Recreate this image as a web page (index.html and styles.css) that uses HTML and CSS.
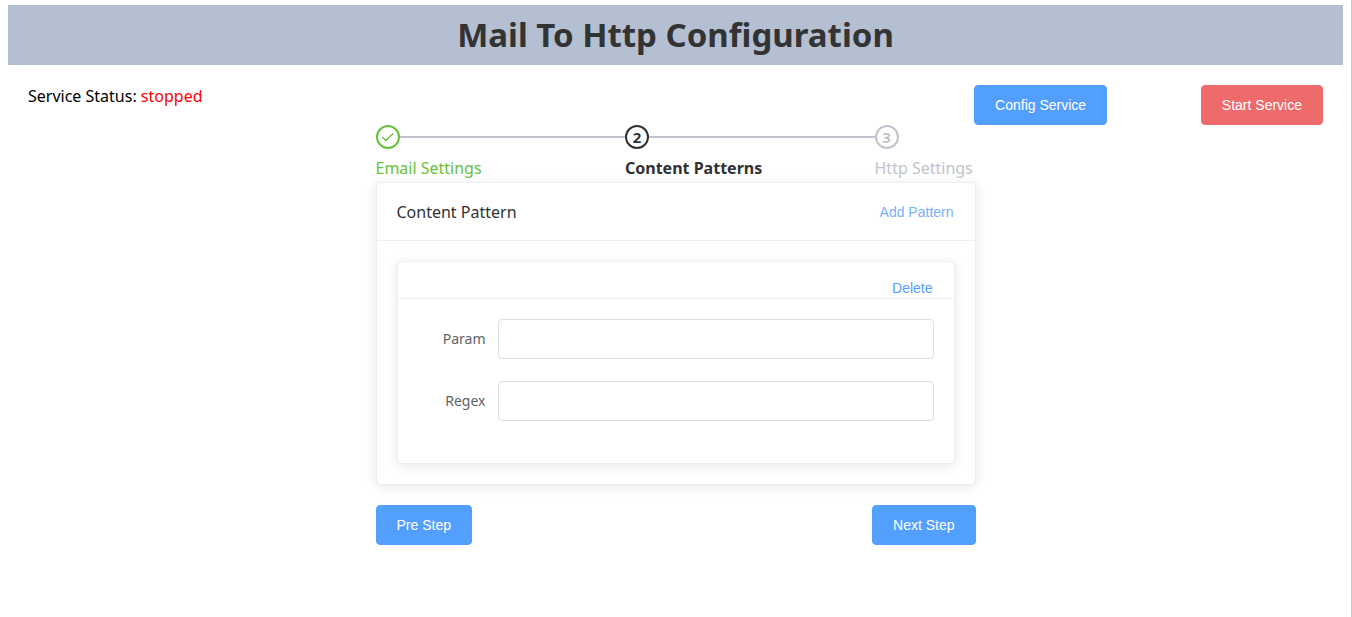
FILE: index.html
```html
<!DOCTYPE html>
<html lang="en">
<head>
<meta charset="utf-8">
<meta name="viewport" content="width=device-width, initial-scale=1">
<title>Mail To Http Configuration</title>
<link rel="stylesheet" href="styles.css">
</head>
<body>
<header class="page-header"><h1 class="page-title">Mail To Http Configuration</h1></header>
<main class="main">
  <div class="toolbar">
    <p class="status">Service Status: <span class="status-value">stopped</span></p>
    <button class="button primary" type="button">Config Service</button>
    <button class="button danger" type="button">Start Service</button>
  </div>
  <section class="wizard">
    <ol class="steps">
      <li class="step done">
        <div class="step-head"><span class="step-icon"><svg class="check" viewBox="0 0 14 14" aria-hidden="true"><path d="M1.3 7 4.8 10.5 12.4 3.2"/></svg></span></div>
        <div class="step-title">Email Settings</div>
      </li>
      <li class="step current">
        <div class="step-head"><span class="step-icon">2</span></div>
        <div class="step-title">Content Patterns</div>
      </li>
      <li class="step waiting">
        <div class="step-head"><span class="step-icon">3</span></div>
        <div class="step-title">Http Settings</div>
      </li>
    </ol>
    <div class="card">
      <div class="card-header">
        <h2 class="card-title">Content Pattern</h2>
        <button class="text-button light" type="button">Add Pattern</button>
      </div>
      <div class="card-body">
        <form class="card">
          <div class="pattern-header"><button class="text-button" type="button">Delete</button></div>
          <div class="card-body">
            <div class="field">
              <label class="field-label" for="param">Param</label>
              <input class="field-input" id="param" type="text">
            </div>
            <div class="field">
              <label class="field-label" for="regex">Regex</label>
              <input class="field-input" id="regex" type="text">
            </div>
          </div>
        </form>
      </div>
    </div>
    <div class="actions">
      <button class="button primary" type="button">Pre Step</button>
      <button class="button primary" type="button">Next Step</button>
    </div>
  </section>
</main>
</body>
</html>
```
FILE: styles.css
```css
* {
  box-sizing: border-box;
}

body {
  min-height: 100vh;
  margin: 0;
  padding: 5px 8px;
  border-right: 1px solid #c8c8c8;
  background: #fff;
  color: #000;
  font: 16px/22px "Noto Sans", "Open Sans", sans-serif;
}

.page-header {
  background: #b4bfd1;
  color: #333;
  text-align: center;
}

.page-title {
  margin: 0;
  font-size: 33px;
  font-weight: 700;
  line-height: 60px;
}

.main {
  padding: 20px;
}

.toolbar {
  display: grid;
  grid-template-columns: 4fr 1fr 1fr;
  justify-items: end;
  align-items: start;
}

.status {
  justify-self: start;
  margin: 0;
}

.status-value {
  color: #f00;
}

.button {
  height: 40px;
  padding: 0 20px;
  border: 1px solid;
  border-radius: 4px;
  color: #fff;
  font: 14px/14px "Liberation Sans", Arial, sans-serif;
  white-space: nowrap;
  cursor: pointer;
}

.primary {
  border-color: #539fff;
  background: #539fff;
}

.danger {
  border-color: #ed6b6b;
  background: #ed6b6b;
}

.wizard {
  max-width: 600px;
  margin: 0 auto;
}

.steps {
  display: flex;
  margin: 0;
  padding: 0;
  list-style: none;
}

.step {
  flex: 1 1 0;
  white-space: nowrap;
}

.step:last-child {
  flex: none;
  min-width: 101px;
}

.step-head {
  display: flex;
  align-items: center;
}

.step:not(:last-child) .step-head::after {
  flex: 1;
  height: 2px;
  background: #c0c4cc;
  content: "";
}

.step-icon {
  display: flex;
  align-items: center;
  justify-content: center;
  width: 24px;
  height: 24px;
  border: 2px solid;
  border-radius: 50%;
  font-size: 15px;
  font-weight: 700;
  line-height: 14px;
}

.check {
  width: 14px;
  height: 14px;
  fill: none;
  stroke: currentColor;
  stroke-width: 1.3;
}

.step-title {
  padding-top: 5px;
  line-height: 28px;
}

.done {
  color: #67c23a;
}

.current {
  color: #303133;
}

.current .step-title {
  font-weight: 700;
}

.waiting {
  color: #c0c4cc;
}

.card {
  border: 1px solid #ebeef5;
  border-radius: 4px;
  background: #fff;
  box-shadow: 0 2px 12px rgba(0, 0, 0, 0.1);
  color: #303133;
}

.card-header {
  display: flex;
  align-items: center;
  justify-content: space-between;
  padding: 18px 20px 17px;
  border-bottom: 1px solid #ebeef5;
}

.card-title {
  margin: 0;
  font-size: 16px;
  font-weight: 400;
  line-height: 22px;
}

.card-body {
  padding: 20px;
}

.pattern-header {
  display: flex;
  justify-content: flex-end;
  padding: 18px 20px 2px;
  border-bottom: 1px solid #ebeef5;
}

.text-button {
  padding: 0 1px;
  border: 0;
  background: none;
  color: #539fff;
  font: 14px/16px "Liberation Sans", Arial, sans-serif;
  cursor: pointer;
}

.light {
  color: #75b2ff;
}

.field {
  display: flex;
  align-items: center;
  margin-bottom: 22px;
}

.field-label {
  flex: none;
  width: 80px;
  padding-right: 12px;
  color: #606266;
  font-size: 14px;
  text-align: right;
}

.field-input {
  flex: 1;
  min-width: 0;
  height: 40px;
  padding: 0 15px;
  border: 1px solid #dcdfe6;
  border-radius: 4px;
  background: #fff;
  color: #606266;
  font: 14px "Liberation Sans", Arial, sans-serif;
}

.actions {
  display: flex;
  justify-content: space-between;
  padding-top: 20px;
}
```
